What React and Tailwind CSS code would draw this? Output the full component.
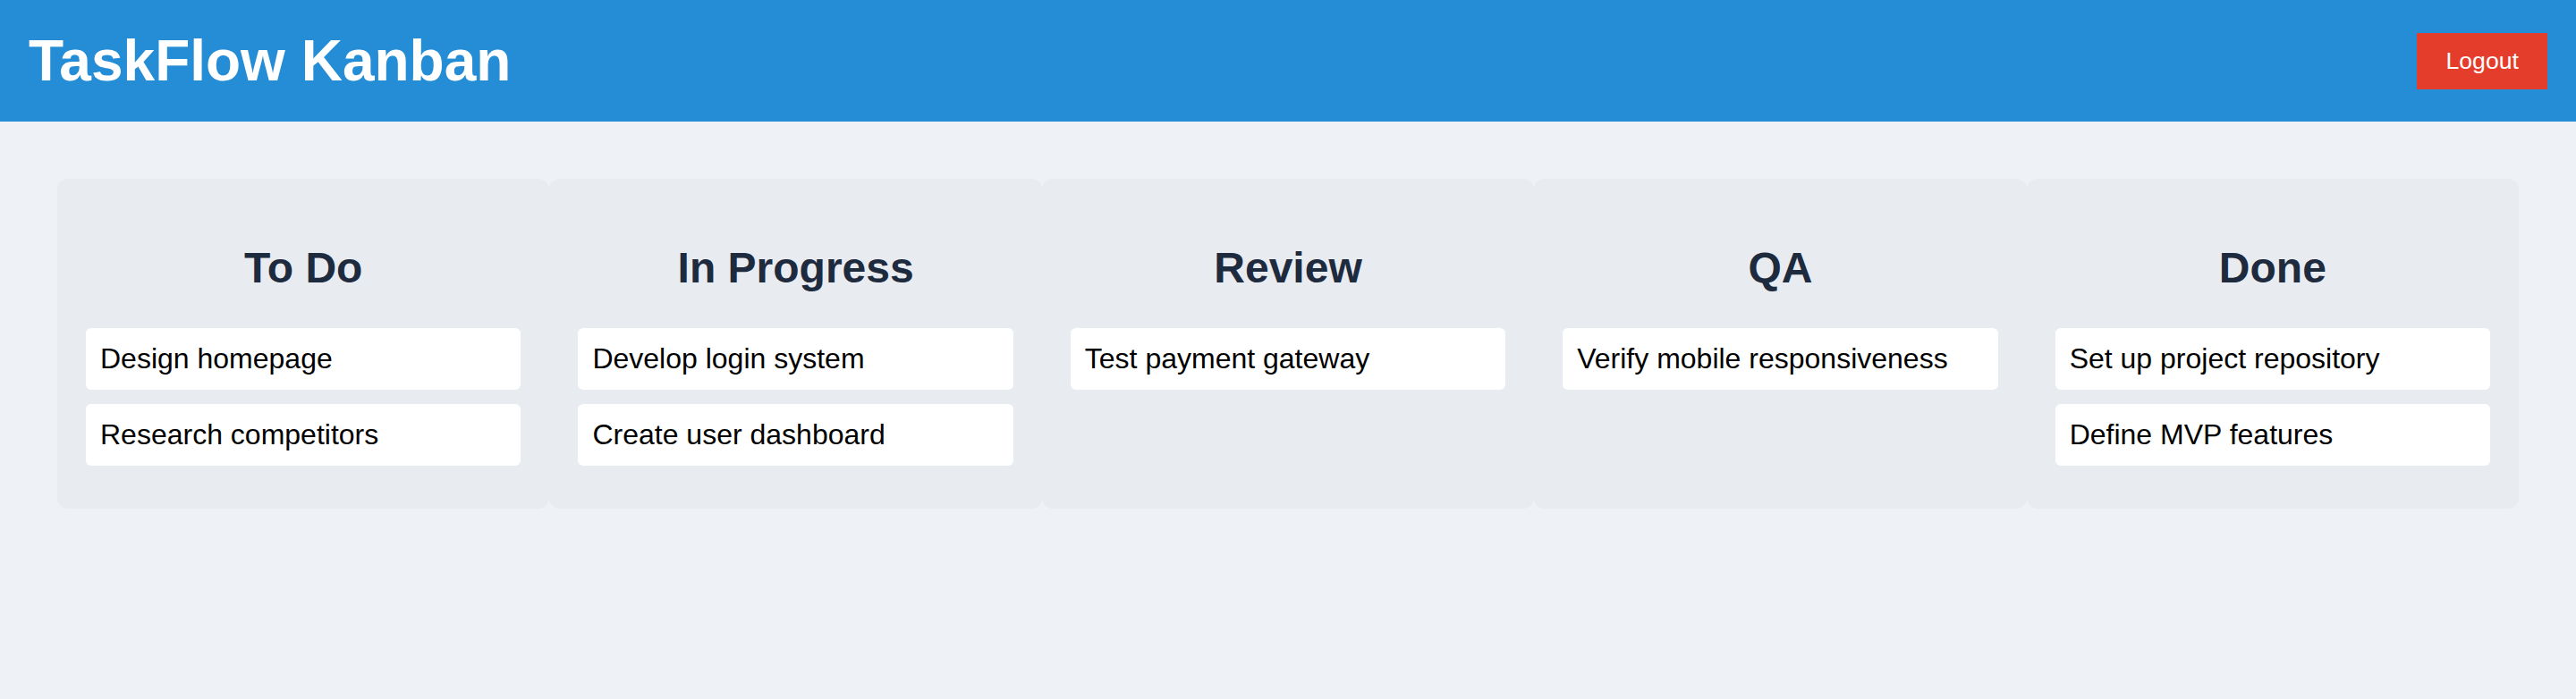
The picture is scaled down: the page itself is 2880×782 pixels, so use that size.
const columns = [
  { title: 'To Do', tasks: ['Design homepage', 'Research competitors'] },
  { title: 'In Progress', tasks: ['Develop login system', 'Create user dashboard'] },
  { title: 'Review', tasks: ['Test payment gateway'] },
  { title: 'QA', tasks: ['Verify mobile responsiveness'] },
  { title: 'Done', tasks: ['Set up project repository', 'Define MVP features'] },
];

function Column({ title, tasks }) {
  return (
    <div className="flex-1 rounded-[12px] bg-[#e8ecf0] p-8">
      <h2 className="my-10 text-center text-[48px] font-bold leading-[55px] text-[#1e2a3d]">
        {title}
      </h2>
      <div className="flex flex-col gap-4 pb-4">
        {tasks.map((task) => (
          <div
            key={task}
            className="rounded-[6px] bg-white px-4 py-4 text-[32px] leading-[37px] text-black"
          >
            {task}
          </div>
        ))}
      </div>
    </div>
  );
}

export default function App() {
  return (
    <div
      className="min-h-[782px] bg-[#eef2f7]"
      style={{ fontFamily: '"Liberation Sans", Arial, sans-serif' }}
    >
      <header className="flex h-[136px] items-center justify-between bg-[#258cd6] px-8">
        <h1 className="text-[64px] font-bold leading-[72px] text-white">TaskFlow Kanban</h1>
        <button className="bg-[#e53d2c] px-8 py-4 text-[26.67px] leading-[31px] text-white">
          Logout
        </button>
      </header>

      <main className="flex px-16 pt-16">
        {columns.map((col) => (
          <Column key={col.title} title={col.title} tasks={col.tasks} />
        ))}
      </main>
    </div>
  );
}
